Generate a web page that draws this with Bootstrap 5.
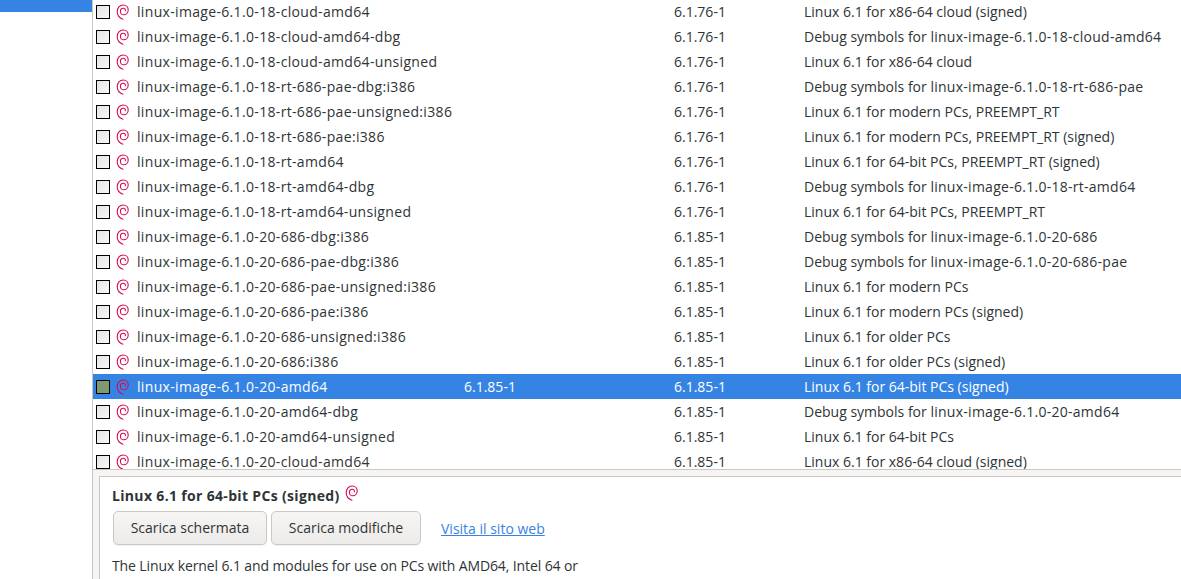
<!DOCTYPE html>
<html lang="it">
<head>
<meta charset="utf-8">
<title>Synaptic</title>
<link rel="stylesheet" href="https://cdn.jsdelivr.net/npm/bootstrap@5.3.0/dist/css/bootstrap.min.css">
<style>
html,body{height:579px;overflow:hidden;background:#fff;}
body{font-family:"Open Sans","Noto Sans",sans-serif;font-size:14px;color:#2e3436;}
.shell{height:579px;}
.side{width:93px;border-right:1px solid #cdc7c2;flex:none;}
.side-sel{height:12px;background:#3584e4;}
.main{min-width:0;}
.pkgs{height:470px;overflow:hidden;border-bottom:1px solid #cdc7c2;}
.pkg-list{margin-top:-1px;}
.pkg{height:25px;line-height:25px;white-space:nowrap;}
.pkg.sel{background:#3584e4;color:#fff;}
.cb{width:14px;height:14px;margin-left:3px;margin-right:6px;border:1px solid #000;background:linear-gradient(135deg,#e4e4e4,#f8f8f8);flex:none;}
.sel .cb{background:#7d9a74;}
.swirl{width:14px;height:16px;flex:none;margin-right:7px;}
.c-name{width:327px;flex:none;letter-spacing:.33px;}
.c-inst{width:210px;flex:none;}
.c-ver{width:130px;flex:none;}
.c-desc{flex:none;}
.pk-ref{letter-spacing:.27px;}
.lower{background:#f6f5f4;padding:6px 0 0 6px;height:109px;}
.detail{background:#fff;border-left:1px solid #cdc7c2;border-top:1px solid #cdc7c2;padding:9px 12px;height:103px;overflow:hidden;}
.d-title{font-weight:700;font-size:14px;line-height:20px;margin-bottom:5px;letter-spacing:.33px;}
.d-title svg{margin-top:-8px;margin-left:1px;}
.btn-row{padding-left:1px;}
.btn-gtk{font-size:14px;color:#2e3436;border:1px solid #cdc7c2;border-radius:5px;background:linear-gradient(#f6f5f4,#edebe9);padding:0;height:34px;line-height:32px;box-shadow:0 1px 1px rgba(0,0,0,.06);}
.w1{width:154px;}
.w2{width:150px;}
.web{color:#3584e4;font-size:14px;margin-left:16px;}
.d-text{margin-top:11px;line-height:20px;letter-spacing:-.11px;}
</style>
</head>
<body>
<svg width="0" height="0" class="position-absolute"><defs>
<symbol id="sw" viewBox="0 0 14 16"><path d="M7 15.2C3.4 14 1.2 11.2 1.2 7.8C1.2 3.8 3.8 1 7.2 1C10.2 1 12.2 3.2 12.2 6C12.2 8.8 10.2 10.8 7.8 10.8C5.8 10.8 4.4 9.4 4.4 7.4C4.4 5.6 5.6 4.2 7.2 4.2C8.6 4.2 9.6 5.2 9.4 6.6" fill="none" stroke="#d70a53" stroke-width="1.1" stroke-linecap="round"/></symbol>
</defs></svg>
<div class="shell d-flex">
  <div class="side"><div class="side-sel"></div></div>
  <div class="main flex-grow-1">
    <div class="pkgs"><div class="pkg-list" id="list"></div></div>
    <div class="lower">
    <div class="detail">
      <div class="d-title">Linux 6.1 for 64-bit PCs (signed) <svg class="swirl me-0" width="14" height="16"><use href="#sw"/></svg></div>
      <div class="btn-row d-flex align-items-center gap-1">
        <button class="btn btn-gtk w1" type="button">Scarica schermata</button>
        <button class="btn btn-gtk w2" type="button">Scarica modifiche</button>
        <a class="web" href="#">Visita il sito web</a>
      </div>
      <div class="d-text">The Linux kernel 6.1 and modules for use on PCs with AMD64, Intel 64 or</div>
    </div>
    </div>
  </div>
</div>
<script>
const rows=[
["linux-image-6.1.0-18-cloud-amd64","6.1.76-1","Linux 6.1 for x86-64 cloud (signed)"],
["linux-image-6.1.0-18-cloud-amd64-dbg","6.1.76-1","Debug symbols for linux-image-6.1.0-18-cloud-amd64"],
["linux-image-6.1.0-18-cloud-amd64-unsigned","6.1.76-1","Linux 6.1 for x86-64 cloud"],
["linux-image-6.1.0-18-rt-686-pae-dbg:i386","6.1.76-1","Debug symbols for linux-image-6.1.0-18-rt-686-pae"],
["linux-image-6.1.0-18-rt-686-pae-unsigned:i386","6.1.76-1","Linux 6.1 for modern PCs, PREEMPT_RT"],
["linux-image-6.1.0-18-rt-686-pae:i386","6.1.76-1","Linux 6.1 for modern PCs, PREEMPT_RT (signed)"],
["linux-image-6.1.0-18-rt-amd64","6.1.76-1","Linux 6.1 for 64-bit PCs, PREEMPT_RT (signed)"],
["linux-image-6.1.0-18-rt-amd64-dbg","6.1.76-1","Debug symbols for linux-image-6.1.0-18-rt-amd64"],
["linux-image-6.1.0-18-rt-amd64-unsigned","6.1.76-1","Linux 6.1 for 64-bit PCs, PREEMPT_RT"],
["linux-image-6.1.0-20-686-dbg:i386","6.1.85-1","Debug symbols for linux-image-6.1.0-20-686"],
["linux-image-6.1.0-20-686-pae-dbg:i386","6.1.85-1","Debug symbols for linux-image-6.1.0-20-686-pae"],
["linux-image-6.1.0-20-686-pae-unsigned:i386","6.1.85-1","Linux 6.1 for modern PCs"],
["linux-image-6.1.0-20-686-pae:i386","6.1.85-1","Linux 6.1 for modern PCs (signed)"],
["linux-image-6.1.0-20-686-unsigned:i386","6.1.85-1","Linux 6.1 for older PCs"],
["linux-image-6.1.0-20-686:i386","6.1.85-1","Linux 6.1 for older PCs (signed)"],
["linux-image-6.1.0-20-amd64","6.1.85-1","Linux 6.1 for 64-bit PCs (signed)","6.1.85-1"],
["linux-image-6.1.0-20-amd64-dbg","6.1.85-1","Debug symbols for linux-image-6.1.0-20-amd64"],
["linux-image-6.1.0-20-amd64-unsigned","6.1.85-1","Linux 6.1 for 64-bit PCs"],
["linux-image-6.1.0-20-cloud-amd64","6.1.85-1","Linux 6.1 for x86-64 cloud (signed)"]];
document.getElementById('list').innerHTML=rows.map(r=>`<div class="pkg d-flex align-items-center${r[3]?' sel':''}"><span class="cb"></span><svg class="swirl"><use href="#sw"/></svg><span class="c-name">${r[0]}</span><span class="c-inst">${r[3]||''}</span><span class="c-ver">${r[1]}</span><span class="c-desc">${r[2].replace(/linux-image\S+/,m=>`<span class="pk-ref">${m}</span>`)}</span></div>`).join('');
</script>
<script src="https://cdn.jsdelivr.net/npm/bootstrap@5.3.0/dist/js/bootstrap.bundle.min.js"></script>
</body>
</html>
